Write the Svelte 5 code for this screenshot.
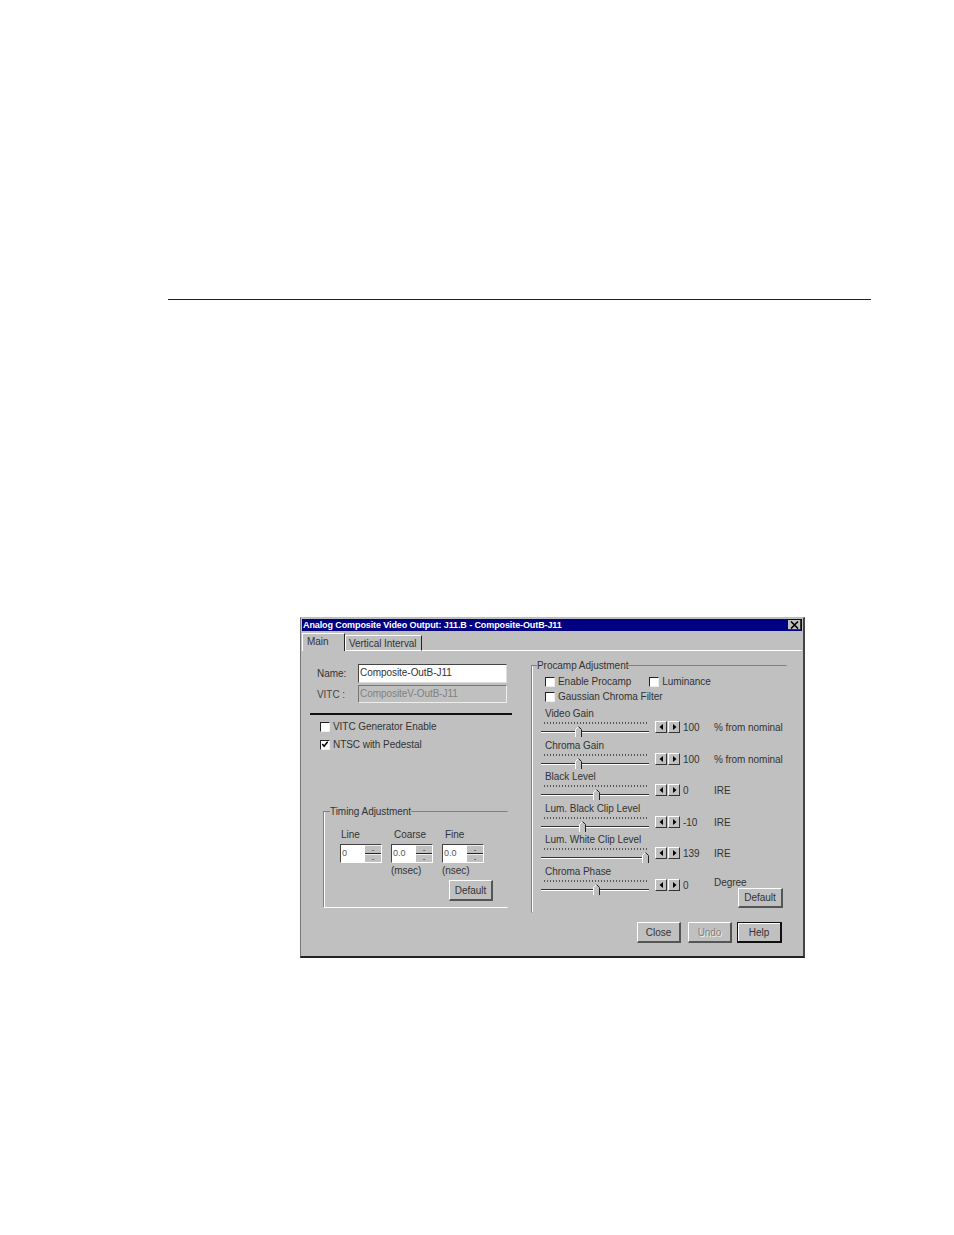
<script lang="ts">
  interface SliderRow {
    label: string;
    pos: number;
    value: string;
    unit: string;
  }

  const sliders: SliderRow[] = [
    { label: "Video Gain", pos: 38, value: "100", unit: "% from nominal" },
    { label: "Chroma Gain", pos: 38, value: "100", unit: "% from nominal" },
    { label: "Black Level", pos: 56, value: "0", unit: "IRE" },
    { label: "Lum. Black Clip Level", pos: 42, value: "-10", unit: "IRE" },
    { label: "Lum. White Clip Level", pos: 105, value: "139", unit: "IRE" },
    { label: "Chroma Phase", pos: 56, value: "0", unit: "Degree" },
  ];

  const timing = [
    { label: "Line", value: "0", note: "" },
    { label: "Coarse", value: "0.0", note: "(msec)" },
    { label: "Fine", value: "0.0", note: "(nsec)" },
  ];
</script>

<div class="page">
  <hr class="rule" />

  <div class="dialog">
    <div class="titlebar">
      <span>Analog Composite Video Output: J11.B - Composite-OutB-J11</span>
      <span class="close-x">
        <svg width="9" height="8" viewBox="0 0 9 8"><path d="M1 0.5 L8 7.5 M8 0.5 L1 7.5" stroke="#000" stroke-width="1.6" /></svg>
      </span>
    </div>

    <div class="tabs">
      <div class="tab active">Main</div>
      <div class="tab">Vertical Interval</div>
      <div class="tab-fill"></div>
    </div>

    <div class="body">
      <div class="left">
        <div class="field">
          <span class="field-label">Name:</span>
          <div class="textbox">Composite-OutB-J11</div>
        </div>
        <div class="field vitc">
          <span class="field-label">VITC :</span>
          <div class="textbox disabled">CompositeV-OutB-J11</div>
        </div>
        <div class="thick"></div>
        <div class="check first"><span class="box"></span>VITC Generator Enable</div>
        <div class="check second">
          <span class="box">
            <svg width="9" height="9" viewBox="0 0 9 9"><path d="M1.5 4 L3.5 6.5 L7.5 1.5" fill="none" stroke="#000" stroke-width="1.7" /></svg>
          </span>
          NTSC with Pedestal
        </div>

        <fieldset class="timing">
          <legend>Timing Adjustment</legend>
          <div class="spinners">
            {#each timing as t}
              <div class="spinner">
                <div class="spin-label">{t.label}</div>
                <div class="spin-box">
                  <div class="spin-input">{t.value}</div>
                  <div class="spin-btns"><span>-</span><span>-</span></div>
                </div>
                <div class="spin-note">{t.note}</div>
              </div>
            {/each}
          </div>
          <div class="btn default-timing">Default</div>
        </fieldset>
      </div>

      <fieldset class="procamp">
        <legend>Procamp Adjustment</legend>
        <div class="proc-checks">
          <div class="check"><span class="box"></span>Enable Procamp</div>
          <div class="check"><span class="box"></span>Luminance</div>
        </div>
        <div class="proc-checks gauss">
          <div class="check"><span class="box"></span>Gaussian Chroma Filter</div>
        </div>

        <div class="sliders">
          {#each sliders as s}
            <div class="slider-row">
              <div class="slider-label">{s.label}</div>
              <div class="slider-line">
                <div class="slider">
                  <div class="ticks"></div>
                  <div class="track"></div>
                  <svg class="thumb" style="left: {s.pos - 4}px" width="8" height="11" viewBox="0 0 8 11">
                    <path d="M0.5 11 V3.5 L3.5 0.5 L6.5 3.5 V11 Z" fill="#c0c0c0" />
                    <path d="M0.5 11 V3.5 L3.5 0.5" fill="none" stroke="#fff" />
                    <path d="M3.5 0.5 L6.5 3.5 V11" fill="none" stroke="#222" />
                  </svg>
                </div>
                <div class="arrows">
                  <span class="arrow"><svg width="5" height="6" viewBox="0 0 5 6"><path d="M4 0 V6 L0.5 3 Z" fill="#000" /></svg></span>
                  <span class="arrow"><svg width="5" height="6" viewBox="0 0 5 6"><path d="M1 0 V6 L4.5 3 Z" fill="#000" /></svg></span>
                </div>
                <div class="slider-value">{s.value}</div>
                <div class="slider-unit" class:raised={s.unit === "Degree"}>{s.unit}</div>
              </div>
            </div>
          {/each}
        </div>
        <div class="btn default-proc">Default</div>
      </fieldset>
    </div>

    <div class="footer">
      <div class="btn">Close</div>
      <div class="btn undo">Undo</div>
      <div class="btn help">Help</div>
    </div>
  </div>
</div>

<style>
  :global(body) {
    margin: 0;
    background: #fff;
  }

  .page {
    height: 1235px;
    padding-top: 299px;
    box-sizing: border-box;
    font-family: "Liberation Sans", Arial, sans-serif;
    font-size: 10px;
    letter-spacing: -0.05px;
    line-height: 11px;
    color: #333;
  }

  .rule {
    width: 703px;
    height: 1px;
    margin: 0 0 0 168px;
    border: none;
    background: #222;
  }

  .dialog {
    width: 505px;
    height: 341px;
    margin: 317px 0 0 300px;
    box-sizing: border-box;
    background: #c0c0c0;
    border-style: solid;
    border-width: 1px 2px 2px 1px;
    border-color: #bbb #444 #222 #777;
    padding: 1px 1px 0 1px;
  }

  .titlebar {
    height: 12px;
    display: flex;
    justify-content: space-between;
    align-items: center;
    padding: 0 1px 0 1px;
    background: #000080;
    color: #fff;
    font-size: 9px;
    font-weight: bold;
    letter-spacing: -0.1px;
  }

  .close-x {
    width: 13px;
    height: 10px;
    display: flex;
    align-items: center;
    justify-content: center;
    background: #c0c0c0;
    border-right: 1px solid #333;
    border-bottom: 1px solid #333;
    box-sizing: border-box;
  }

  .tabs {
    display: flex;
    height: 18px;
    margin-top: 2px;
  }

  .tab {
    padding: 2px 3px 0 3px;
    box-sizing: border-box;
    border-top: 1px solid #fff;
    border-right: 1px solid #222;
    border-left: 1px solid #fff;
    border-bottom: 1px solid #fff;
    width: 77px;
    margin-top: 2px;
    white-space: nowrap;
  }

  .tab.active {
    width: 43px;
    margin-top: 0;
    padding: 2px 0 0 4px;
    border-bottom: none;
  }

  .tab-fill {
    flex: 1;
    border-bottom: 1px solid #fff;
  }

  .body {
    display: flex;
    gap: 19px;
    padding: 9px 0 0 8px;
  }

  .left {
    width: 202px;
    padding-top: 4px;
  }

  .field {
    display: flex;
    align-items: center;
    padding-left: 7px;
    height: 19px;
  }

  .field.vitc {
    margin-top: 2px;
    height: 18px;
    color: #444;
  }

  .field-label {
    width: 41px;
  }

  .textbox {
    width: 149px;
    height: 100%;
    box-sizing: border-box;
    padding: 2px 0 0 1px;
    background: #fff;
    border-style: solid;
    border-width: 1px;
    border-color: #444 #ddd #ddd #444;
  }

  .textbox.disabled {
    background: #c0c0c0;
    color: #808080;
    border-color: #777 #eee #eee #777;
  }

  .thick {
    height: 2px;
    margin-top: 10px;
    background: #111;
  }

  .check {
    display: flex;
    align-items: center;
    gap: 3px;
    height: 11px;
    white-space: nowrap;
  }

  .check.first {
    margin: 6px 0 0 10px;
  }

  .check.second {
    margin: 7px 0 0 10px;
  }

  .box {
    width: 10px;
    height: 10px;
    flex: none;
    box-sizing: border-box;
    background: #fff;
    border-style: solid;
    border-width: 1px;
    border-color: #222 #eee #eee #222;
    display: flex;
    align-items: center;
    justify-content: center;
  }

  fieldset {
    margin: 0;
    padding: 0;
    min-width: 0;
    box-sizing: border-box;
    border-style: solid;
    border-width: 1px;
  }

  legend {
    padding: 0;
    white-space: nowrap;
  }

  .timing {
    width: 185px;
    height: 102px;
    margin: 56px 0 0 13px;
    padding: 12px 14px 0 16px;
    border-color: #808080 transparent #fff #808080;
    box-shadow: inset 1px 0 0 #fff;
  }

  .timing legend {
    margin-left: -10px;
  }

  .spinners {
    display: flex;
    gap: 9px;
  }

  .spinner {
    width: 42px;
  }

  .spin-label {
    padding-left: 1px;
  }

  .spinner:nth-child(2) .spin-label,
  .spinner:nth-child(3) .spin-label {
    padding-left: 3px;
  }

  .spin-box {
    display: flex;
    height: 19px;
    margin-top: 4px;
    background: #fff;
    border-style: solid;
    border-width: 1px;
    border-color: #444 #fff #fff #444;
    box-sizing: border-box;
  }

  .spin-input {
    flex: 1;
    padding: 3px 0 0 1px;
    color: #555;
    font-size: 9px;
  }

  .spin-btns {
    width: 16px;
    display: flex;
    flex-direction: column;
    gap: 1px;
    background: #222;
  }

  .spin-btns span {
    flex: 1;
    background: #c0c0c0;
    text-align: center;
    line-height: 7px;
    font-size: 8px;
    border-top: 1px solid #eee;
  }

  .spin-note {
    height: 11px;
    margin-top: 2px;
  }

  .btn {
    display: flex;
    align-items: center;
    justify-content: center;
    width: 44px;
    height: 21px;
    box-sizing: border-box;
    background: #c0c0c0;
    border-style: solid;
    border-width: 1px 2px 2px 1px;
    border-color: #fff #555 #555 #fff;
  }

  .default-timing {
    margin: 4px 0 0 auto;
  }

  .procamp {
    width: 256px;
    height: 253px;
    padding: 5px 3px 0 9px;
    border-color: #808080 transparent transparent #808080;
    box-shadow: inset 1px 0 0 #fff;
  }

  .procamp legend {
    margin-left: -4px;
  }

  .proc-checks {
    display: flex;
    gap: 18px;
    padding-left: 4px;
  }

  .proc-checks.gauss {
    margin-top: 4px;
  }

  .sliders {
    margin-top: 6px;
  }

  .slider-row {
    height: 31.5px;
  }

  .slider-label {
    height: 11px;
    padding-left: 4px;
    white-space: nowrap;
  }

  .slider-line {
    display: flex;
    align-items: flex-start;
  }

  .slider {
    position: relative;
    width: 108px;
    height: 18px;
    flex: none;
  }

  .ticks {
    height: 2px;
    margin: 3px 1px 0 3px;
    background: repeating-linear-gradient(90deg, #555 0 1px, transparent 1px 3px);
  }

  .track {
    height: 1px;
    margin-top: 7px;
    background: #333;
    border-bottom: 1px solid #fff;
  }

  .thumb {
    position: absolute;
    top: 7px;
  }

  .arrows {
    display: flex;
    gap: 1px;
    margin: 2px 0 0 6px;
    flex: none;
  }

  .arrow {
    width: 12px;
    height: 12px;
    box-sizing: border-box;
    background: #c0c0c0;
    border-style: solid;
    border-width: 1px;
    border-color: #fff #333 #333 #fff;
    display: flex;
    align-items: center;
    justify-content: center;
  }

  .slider-value {
    width: 34px;
    padding: 3px 0 0 3px;
    box-sizing: border-box;
    flex: none;
  }

  .slider-unit {
    padding-top: 3px;
    white-space: nowrap;
  }

  .slider-unit.raised {
    padding-top: 0;
  }

  .default-proc {
    width: 45px;
    height: 20px;
    margin: -9px 0 0 auto;
  }

  .footer {
    display: flex;
    justify-content: flex-end;
    padding: 9px 20px 0 0;
    gap: 7px;
  }

  .footer .undo {
    color: #808080;
    text-shadow: 1px 1px 0 #eee;
  }

  .footer .help {
    width: 45px;
    margin-left: -2px;
    border: 1px solid #111;
    border-right-width: 2px;
    border-bottom-width: 2px;
    box-shadow: inset 1px 1px 0 #fff;
  }
</style>
